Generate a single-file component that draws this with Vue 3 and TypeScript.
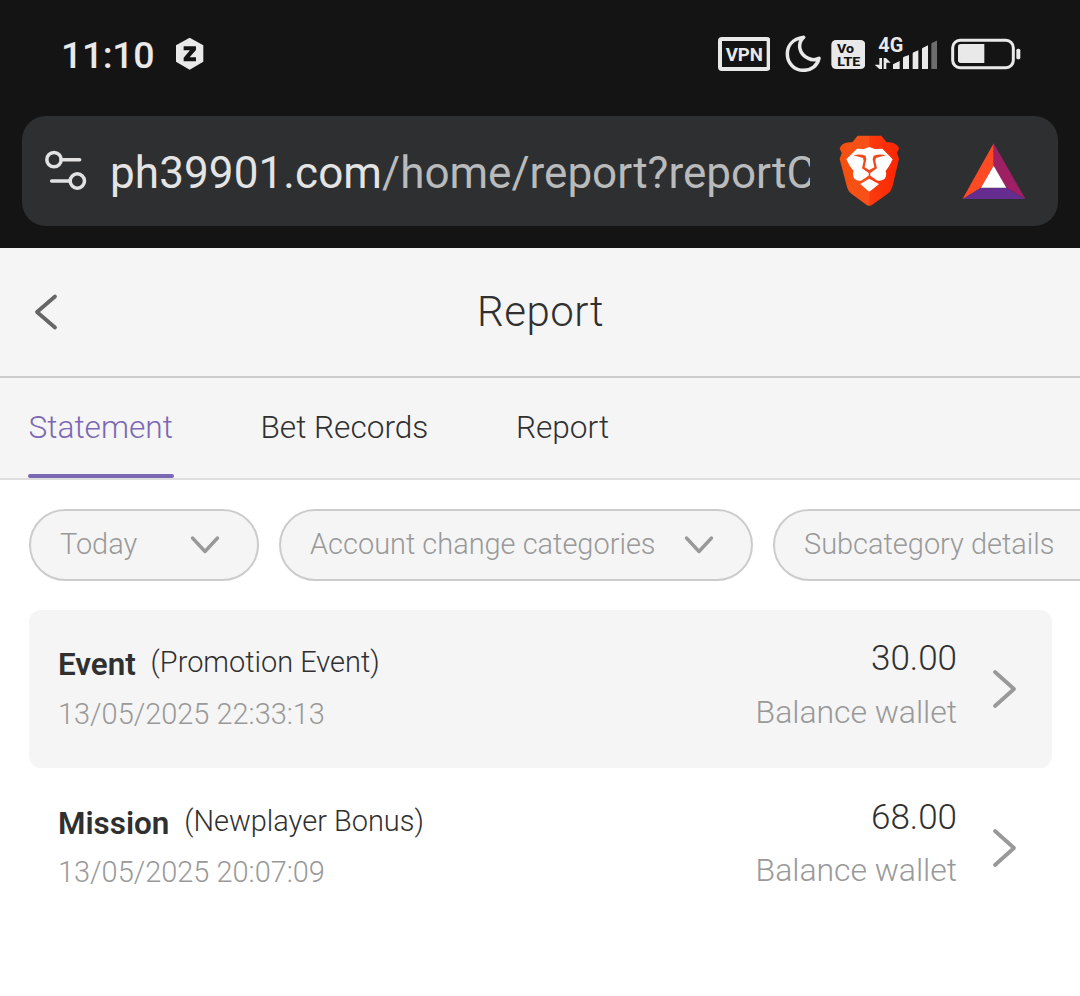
<script setup lang="ts">
interface Entry {
  kind: string
  detail: string
  time: string
  amount: string
}

const tabs: string[] = ['Statement', 'Bet Records', 'Report']
const entries: Entry[] = [
  { kind: 'Event', detail: '(Promotion Event)', time: '13/05/2025 22:33:13', amount: '30.00' },
  { kind: 'Mission', detail: '(Newplayer Bonus)', time: '13/05/2025 20:07:09', amount: '68.00' },
]
</script>

<template>
  <div class="screen">
    <div class="chrome">
      <div class="status">
        <span class="clock">11:10</span>
        <svg class="hex" viewBox="406 52 88 100">
          <path d="M450 54 L491 77 V126 L450 150 L409 126 V77 Z" fill="#e9e9e9" />
          <path d="M432 80 H469 V91 L450 113 H469 V125 H432 V114 L451 92 H432 Z" fill="#141414" />
        </svg>
        <div class="indicators">
          <svg class="vpn" viewBox="53 45 158 112">
            <rect x="59" y="57" width="146" height="90" rx="6" fill="none" stroke="#e9e9e9" stroke-width="12" />
            <text x="76" y="122" font-size="55" font-weight="700" textLength="112" lengthAdjust="spacingAndGlyphs">VPN</text>
          </svg>
          <svg class="moon" viewBox="255 45 108 112">
            <path d="M311 52 C276 57 262 79 262 102 C262 132 285 151 311 151 C334 151 352 137 357 115 C347 120 335 120 325 115 C298 103 290 72 311 52 Z" fill="none" stroke="#e9e9e9" stroke-width="10.5" stroke-linejoin="round" />
          </svg>
          <svg class="volte" viewBox="392 45 103 112">
            <rect x="393" y="60" width="102" height="87" rx="14" fill="#e9e9e9" />
            <text class="ink" x="410" y="99" font-size="38" font-weight="800" textLength="51" lengthAdjust="spacingAndGlyphs">Vo</text>
            <text class="ink" x="411" y="137" font-size="40" font-weight="800" textLength="69" lengthAdjust="spacingAndGlyphs">LTE</text>
          </svg>
          <svg class="signal" viewBox="522 45 191 112">
            <text x="535" y="95" font-size="59" font-weight="700" textLength="75" lengthAdjust="spacingAndGlyphs">4G</text>
            <g fill="#e9e9e9">
              <path d="M538 114 H546 V147 H538 L524 134 H538 Z" />
              <path d="M551 147 V114 H558 L572 128 H559 V147 Z" />
              <path d="M579 147 V133 L599 123 V147 Z" />
              <path d="M609 147 V114 Q609 111 612 110 L627 105 V147 Z" />
              <path d="M638 147 V101 Q638 98 641 97 L655 91 V147 Z" />
              <path d="M666 147 V87 Q666 84 669 83 L684 76 V147 Z" />
            </g>
            <path d="M694 147 V72 Q694 69 697 68 L712 61 V147 Z" fill="#6d6d6d" />
          </svg>
          <svg class="battery" viewBox="752 45 210 112">
            <rect x="757" y="61" width="182" height="82" rx="22" fill="none" stroke="#e9e9e9" stroke-width="9" />
            <path d="M781 72 H852 V129 H781 Q773 129 773 121 V80 Q773 72 781 72 Z" fill="#e9e9e9" />
            <rect x="948" y="86" width="12" height="32" rx="5" fill="#e9e9e9" />
          </svg>
        </div>
      </div>
      <div class="address">
        <svg class="tune" viewBox="102 120 130 124">
          <g fill="none" stroke="#e2e2e2" stroke-width="10.5">
            <circle cx="132" cy="149" r="21.5" />
            <circle cx="202" cy="213" r="21.5" />
            <path d="M153 149 H209 M125 213 H181" stroke-linecap="round" />
          </g>
        </svg>
        <div class="url"><span class="host">ph39901.com</span>/home/report?reportCategory</div>
        <svg class="lion" viewBox="60 58 182 214">
          <defs>
            <linearGradient id="shield" x1="0" x2="1" y1="0" y2="0">
              <stop offset="0" stop-color="#f4500f" />
              <stop offset="0.49" stop-color="#f9501a" />
              <stop offset="0.51" stop-color="#fb3a10" />
              <stop offset="1" stop-color="#fd2500" />
            </linearGradient>
          </defs>
          <path d="M116 60 H187 L203 80 Q220 78 232 87 Q240 92 240 99 L234 111 L240 130 L221 210 Q217 227 205 235 L162 266 Q151 275 140 266 L98 235 Q87 227 83 210 L62 130 L68 112 L62 99 Q64 91 71 86 Q82 78 100 80 Z" fill="url(#shield)" />
          <path d="M114 99 L135 100 L151 94 L167 100 L190 99 L221 131 L211 150 L200 166 Q205 181 196 190 Q188 197 176 195 L154 181 Q151 179 148 181 L126 195 Q115 197 107 190 Q99 181 104 166 L92 150 L82 131 Z" fill="#fff" />
          <path d="M103 119 Q121 114 140 120 L142 131 L137 155 L151 163 L166 155 L161 131 L164 120 Q182 114 201 119 L171 127 L169 136 L174 158 L154 172 L154 180 L174 196 L151 184 L130 196 L149 180 L149 172 L129 158 L134 136 L132 127 Z" fill="#f04a1c" />
          <path d="M151 189 L180 205 L155 225 Q151 228 147 225 L124 205 Z" fill="#fff" />
        </svg>
        <svg class="bat" viewBox="428 80 192 170">
          <path d="M523 81 V148 L485 214 L429 249 Z" fill="#ff4a24" />
          <path d="M523 81 L619 249 L561 214 L523 148 Z" fill="#9e1f63" />
          <path d="M429 249 L485 214 H561 L619 249 Z" fill="#662d91" />
          <path d="M523 148 L561 214 H485 Z" fill="#fff" />
        </svg>
      </div>
    </div>

    <header class="title-bar">
      <svg class="back" viewBox="0 0 24 38">
        <path d="M21 3.5 L3 19 L21 34.5" fill="none" stroke="#666" stroke-width="3.8" stroke-linecap="round" stroke-linejoin="round" />
      </svg>
      <h1>Report</h1>
    </header>

    <nav class="tabs">
      <span v-for="(tab, i) in tabs" :key="tab" class="tab" :class="{ active: i === 0 }">{{ tab }}</span>
    </nav>

    <div class="filters">
      <div class="chip today">
        <span>Today</span>
        <svg viewBox="0 0 30 20"><path d="M2.5 3 L15 16.5 L27.5 3" /></svg>
      </div>
      <div class="chip account">
        <span>Account change categories</span>
        <svg viewBox="0 0 30 20"><path d="M2.5 3 L15 16.5 L27.5 3" /></svg>
      </div>
      <div class="chip sub">
        <span>Subcategory details</span>
        <svg viewBox="0 0 30 20"><path d="M2.5 3 L15 16.5 L27.5 3" /></svg>
      </div>
    </div>

    <ul class="list">
      <li v-for="entry in entries" :key="entry.time" class="entry">
        <div class="info">
          <div class="name"><strong>{{ entry.kind }}</strong><span>{{ entry.detail }}</span></div>
          <div class="time">{{ entry.time }}</div>
        </div>
        <div class="value">
          <div class="amount">{{ entry.amount }}</div>
          <div class="wallet">Balance wallet</div>
        </div>
        <svg class="more" viewBox="0 0 26 40">
          <path d="M3 3 L22 20 L3 37" fill="none" stroke="#999" stroke-width="3.8" stroke-linecap="round" stroke-linejoin="round" />
        </svg>
      </li>
    </ul>
  </div>
</template>

<style>
body {
  margin: 0;
  overflow: hidden;
}
</style>

<style scoped>
.screen {
  width: 1080px;
  height: 996px;
  overflow: hidden;
  background: #fff;
  color: #303030;
  font-family: Roboto, 'Liberation Sans', sans-serif;
  font-weight: 300;
}
svg {
  display: block;
  flex: none;
}
.chrome {
  height: 248px;
  background: #141414;
}
.status {
  display: flex;
  align-items: center;
  box-sizing: border-box;
  height: 116px;
  padding: 0 59.4px 8.6px 61px;
}
.clock {
  width: 114.4px;
  padding-top: 2px;
  color: #e9e9e9;
  font-size: 37.5px;
  font-weight: 500;
  letter-spacing: -0.4px;
  line-height: 44px;
}
.hex {
  width: 29.3px;
  height: 33.3px;
}
.indicators {
  display: flex;
  margin-left: auto;
}
.indicators svg {
  height: 37.33px;
}
.indicators text {
  fill: #e9e9e9;
}
.indicators .ink {
  fill: #141414;
}
.vpn { width: 52.67px; }
.moon { width: 36px; margin-left: 14.67px; }
.volte { width: 34.33px; margin-left: 9.67px; }
.signal { width: 63.67px; margin-left: 8.6px; }
.battery { width: 70px; margin-left: 13.4px; }

.address {
  display: flex;
  align-items: center;
  box-sizing: border-box;
  width: 1036px;
  height: 110px;
  margin: 0 22px;
  padding-left: 22px;
  border-radius: 24px;
  background: #2e2f31;
}
.tune {
  width: 43.33px;
  height: 41.33px;
}
.url {
  width: 700px;
  margin-left: 22.7px;
  padding-top: 4px;
  overflow: hidden;
  white-space: nowrap;
  color: #b9babb;
  font-size: 44px;
  font-weight: 400;
  letter-spacing: 0;
  line-height: 56px;
}
.host {
  color: #e4e4e4;
  letter-spacing: 0.1px;
}
.lion {
  width: 60.67px;
  height: 71.33px;
  margin-left: 29.3px;
}
.bat {
  width: 64px;
  height: 56.67px;
  margin-left: 62px;
}

.title-bar {
  display: grid;
  grid-template-columns: 100px 1fr 100px;
  align-items: center;
  box-sizing: border-box;
  height: 130px;
  border-bottom: 2px solid #ccc;
  background: #f5f5f5;
}
.back {
  width: 24px;
  height: 38px;
  margin-left: 34px;
}
h1 {
  margin: 0;
  padding-left: 1px;
  text-align: center;
  font-size: 42px;
  font-weight: 300;
  letter-spacing: 0.5px;
  line-height: 50px;
}

.tabs {
  display: flex;
  gap: 85.6px;
  box-sizing: border-box;
  height: 102px;
  padding-left: 27.6px;
  border-bottom: 2px solid #dedede;
  background: #f5f5f5;
}
.tab {
  box-sizing: border-box;
  height: 100px;
  padding: 2px 1px 0;
  font-size: 31.6px;
  line-height: 96px;
}
.active {
  color: #7b68b2;
}
.active::after {
  content: '';
  display: block;
  height: 4px;
  margin: -2px -1px 0;
  border-radius: 2px;
  background: #7b68b2;
}

.filters {
  display: flex;
  gap: 20px;
  margin: 29px 0;
  padding-left: 29px;
}
.chip {
  display: flex;
  flex: none;
  align-items: center;
  justify-content: space-between;
  box-sizing: border-box;
  height: 72px;
  padding: 0 37px 0 29px;
  border: 2px solid #ccc;
  border-radius: 36px;
  background: #f5f5f5;
  color: #999;
  font-size: 28.95px;
}
.chip span {
  padding-bottom: 2px;
  white-space: nowrap;
}
.chip svg {
  width: 30px;
  height: 20px;
  fill: none;
  stroke: #999;
  stroke-width: 3.4;
  stroke-linecap: round;
  stroke-linejoin: round;
}
.today { width: 230px; }
.account { width: 474px; }
.sub { width: 376px; }

.list {
  margin: 0 28px 0 29px;
  padding: 0;
  list-style: none;
}
.entry {
  display: flex;
  box-sizing: border-box;
  height: 158.4px;
  padding: 0 34px 0 29px;
  border-radius: 12px;
}
.entry:nth-child(odd) {
  background: #f5f5f5;
}
.info {
  flex: 1;
  padding-top: 34.2px;
}
.name {
  display: flex;
  height: 49.8px;
  line-height: 36px;
}
.name strong {
  margin-right: 14.8px;
  padding-top: 3px;
  font-size: 31.4px;
  font-weight: 600;
}
.name span {
  font-size: 28.95px;
}
.time {
  color: #999;
  font-size: 28.95px;
  line-height: 40px;
}
.value {
  padding-top: 29.2px;
  text-align: right;
}
.amount {
  font-size: 35px;
  line-height: 40px;
}
.wallet {
  margin-top: 12.8px;
  color: #999;
  font-size: 32px;
  letter-spacing: -0.05px;
  line-height: 40px;
}
.more {
  width: 26px;
  height: 40px;
  margin: 59.2px 0 0 35px;
}
</style>
